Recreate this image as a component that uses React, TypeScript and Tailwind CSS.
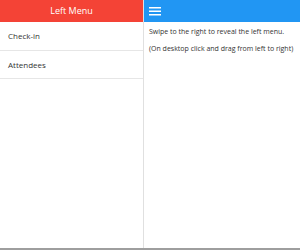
import React from 'react';

const font = { fontFamily: '"Open Sans", "Noto Sans", sans-serif' };

const App: React.FC = () => {
  return (
    <div className="flex flex-col h-[250px] w-[300px] bg-white" style={font}>
      <div className="flex flex-1 overflow-hidden">
        {/* Left menu */}
        <div className="w-[144px] flex flex-col border-r border-[#e0e0e0]">
          <div className="h-[22px] bg-[#f44336] flex items-center justify-center text-white text-[9px]">
            Left Menu
          </div>
          <div className="h-[29px] flex items-center px-2 border-b border-[#e6e6e6] text-[8px] text-[#333]">
            Check-in
          </div>
          <div className="h-[28px] flex items-center px-2 border-b border-[#e6e6e6] text-[8px] text-[#333]">
            Attendees
          </div>
        </div>

        {/* Main content */}
        <div className="flex-1 flex flex-col">
          <div className="h-[22px] bg-[#2196f3] flex items-center px-[5px]">
            <svg width="12" height="10" viewBox="0 0 12 10" fill="white">
              <rect x="0" y="1" width="12" height="1.5" />
              <rect x="0" y="4.5" width="12" height="1.5" />
              <rect x="0" y="8" width="12" height="1.5" />
            </svg>
          </div>
          <div className="px-[5px] pt-[5px] text-[7px] text-[#333] flex flex-col gap-[6px]">
            <p>Swipe to the right to reveal the left menu.</p>
            <p>(On desktop click and drag from left to right)</p>
          </div>
        </div>
      </div>
      <div className="h-[2px] bg-[#9e9e9e]" />
    </div>
  );
};

export default App;
